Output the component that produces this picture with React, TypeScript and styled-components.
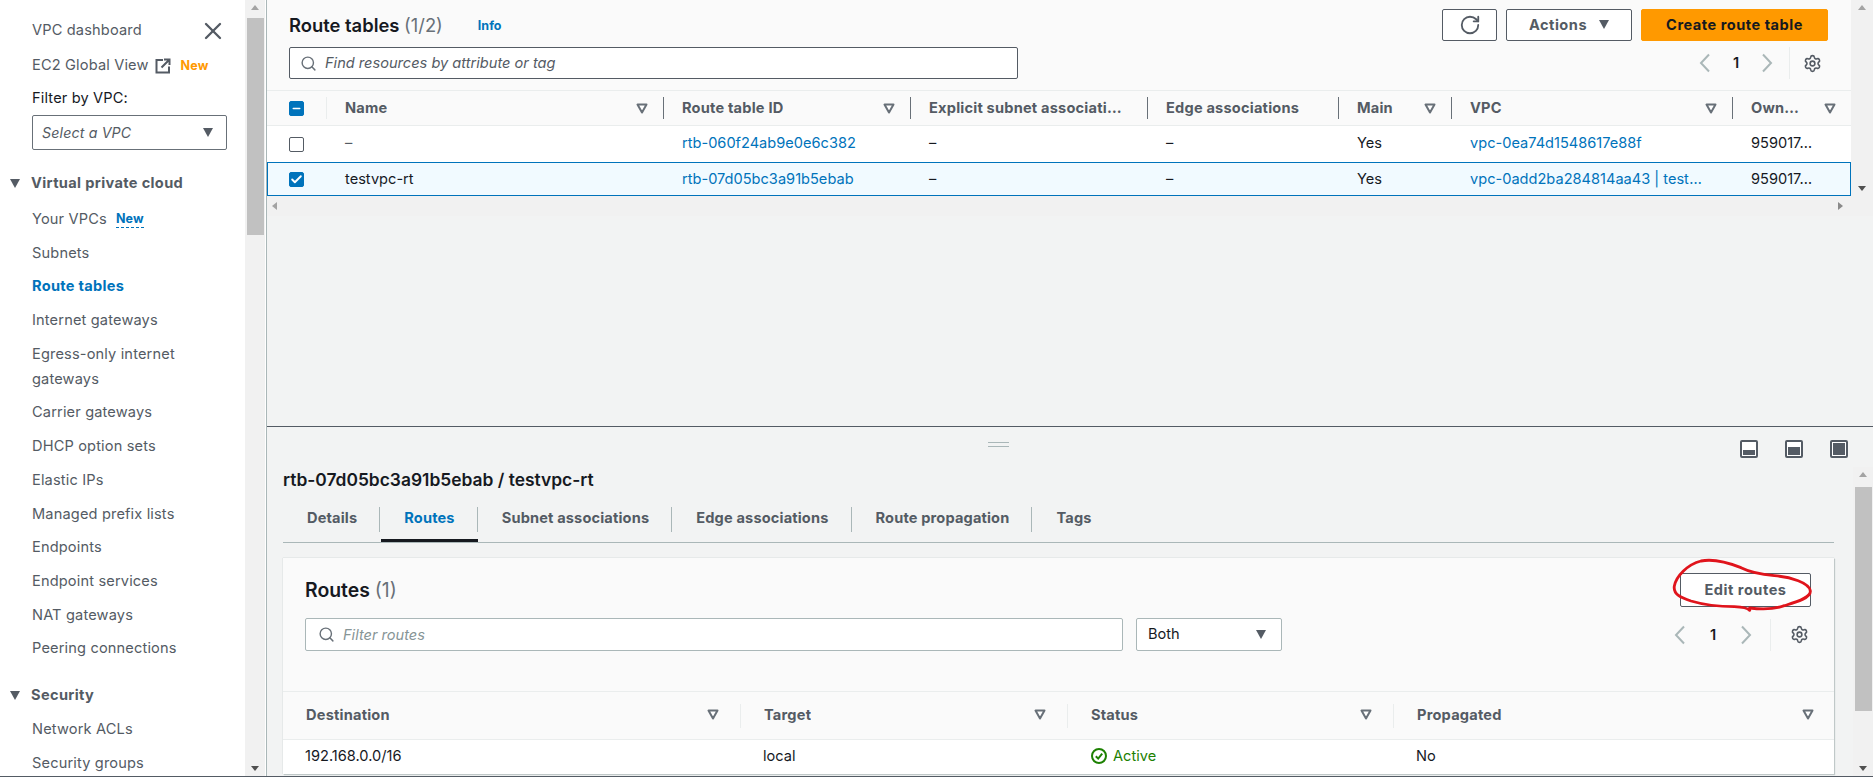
import React from "react";
import styled, { createGlobalStyle } from "styled-components";
import { RotateCw, Search, Settings, X, Check, Minus } from "lucide-react";

const FONT = `Inter, "Noto Sans", "Liberation Sans", sans-serif`;

const Global = createGlobalStyle`
  html, body { margin: 0; padding: 0; background: #fff; }
  body { font-family: ${FONT}; font-size: 14.6px; color: #16191f; }
  * { box-sizing: border-box; }
`;

const Page = styled.div`
  width: 1873px; height: 777px; display: flex; overflow: hidden;
  border-bottom: 1px solid #545b64;
`;
const Nav = styled.nav`
  width: 245px; flex: none; height: 100%; padding: 18px 0 0 32px; overflow: hidden; position: relative;
  color: #545b64; line-height: 25px; letter-spacing: 0.15px;
`;
const NavTopRow = styled.div`display: flex; align-items: center; justify-content: space-between; padding-right: 18px; height: 25px;`;
const NavLine = styled.div<{ $mt?: number }>`
  display: flex; align-items: center; margin-top: ${p => p.$mt ?? 8.7}px; gap: 6px; color: #545b64;
`;
const NavItem = styled.div<{ $active?: boolean }>`
  margin-top: 8.7px; width: 185px; color: ${p => p.$active ? "#0073bb" : "#545b64"};
  font-weight: ${p => p.$active ? 700 : 400};
  letter-spacing: ${p => p.$active ? 0.3 : 0.15}px;
`;
const OrangeNew = styled.span`color: #ff9900; font-size: 12.5px; font-weight: 700; margin-left: 4px;`;
const BlueNew = styled.span`color: #0073bb; font-size: 12.5px; font-weight: 700; line-height: 16px; border-bottom: 1px dashed #0073bb; margin-left: 3px;`;
const FilterLabel = styled.div`color: #16191f; margin-top: 8px;`;
const VpcSelect = styled.div`
  width: 195px; height: 35px; margin-top: 4px; border: 1px solid #687078; border-radius: 2px; background: #fff;
  display: flex; align-items: center; justify-content: space-between; padding: 0 13px 0 9px;
  font-style: italic; font-size: 14.2px; color: #545b64;
`;
const Caret = styled.span<{ $w?: number; $h?: number; $c?: string }>`
  display: inline-block; width: 0; height: 0; flex: none;
  border-left: ${p => (p.$w ?? 11) / 2}px solid transparent; border-right: ${p => (p.$w ?? 11) / 2}px solid transparent;
  border-top: ${p => p.$h ?? 9}px solid ${p => p.$c ?? "#545b64"};
`;
const SectionHead = styled.div<{ $mt: number }>`
  display: flex; align-items: center; margin: ${p => p.$mt}px 0 0 -22px; gap: 11px; font-weight: 700; color: #545b64; letter-spacing: 0.35px;
`;

const VScroll = styled.div<{ $w: number }>`
  width: ${p => p.$w}px; flex: none; height: 100%; background: #f1f1f1;
  display: flex; flex-direction: column; align-items: center; justify-content: space-between; padding: 5px 0;
  position: relative;
`;
const ArrowUp = styled.span`width: 0; height: 0; border-left: 4.5px solid transparent; border-right: 4.5px solid transparent; border-bottom: 5px solid #a3a3a3;`;
const ArrowDown = styled.span`width: 0; height: 0; border-left: 4.5px solid transparent; border-right: 4.5px solid transparent; border-top: 5px solid #505050;`;
const Thumb = styled.div<{ $top: number; $h: number }>`
  position: absolute; left: 2px; right: 1px; top: ${p => p.$top}px; height: ${p => p.$h}px; background: #c1c1c1;
`;

const Main = styled.main`
  flex: 1; min-width: 0; height: 100%; margin-left: 1px; border-left: 1px solid #aab7b8; display: flex; flex-direction: column;
`;
const TopPanel = styled.section`
  height: 427px; flex: none; border-bottom: 1px solid #545b64; background: #f2f3f3; display: flex; flex-direction: column;
`;
const TopArea = styled.div`display: flex; height: 196px; flex: none; background: #fafafa;`;
const TopContent = styled.div`flex: 1; min-width: 0; display: flex; flex-direction: column;`;
const HeadRow = styled.div`display: flex; justify-content: space-between; align-items: center; padding: 9px 23px 0 22px; height: 41px;`;
const Title = styled.div`display: flex; align-items: center; gap: 35px;`;
const H2 = styled.h2`
  margin: 0; font-size: 18.4px; font-weight: 600; color: #16191f; line-height: 24px;
  span { font-weight: 400; color: #687078; }
`;
const PanelHeading = styled(H2)`font-size: 17.4px;`;
const CardHeading = styled(H2)`font-size: 19.4px;`;
const Info = styled.a`color: #0073bb; font-size: 12.5px; font-weight: 700;`;
const Actions = styled.div`display: flex; gap: 9px;`;
const Btn = styled.button<{ $w: number; $primary?: boolean; $h?: number }>`
  width: ${p => p.$w}px; height: ${p => p.$h ?? 32}px; border-radius: 2px; font: 700 14.6px ${FONT}; letter-spacing: 0.5px;
  display: flex; align-items: center; justify-content: center; gap: 12px; padding: 0 0 1px;
  border: 1px solid ${p => p.$primary ? "#ff9900" : "#545b64"};
  background: ${p => p.$primary ? "#ff9900" : "#fff"};
  color: ${p => p.$primary ? "#16191f" : "#545b64"};
  position: relative;
`;
const SearchRow = styled.div`display: flex; justify-content: space-between; align-items: center; padding: 6px 22px 0 22px; height: 38px;`;
const SearchBox = styled.div<{ $w: number; $h: number; $border: string; $pl: number }>`
  width: ${p => p.$w}px; height: ${p => p.$h}px; background: #fff; border: 1px solid ${p => p.$border}; border-radius: 2px;
  display: flex; align-items: center; padding-left: ${p => p.$pl}px; gap: 8px; color: #545b64;
`;
const Placeholder = styled.span<{ $c: string }>`font-style: italic; color: ${p => p.$c};`;
const Pager = styled.div<{ $pr: number }>`display: flex; align-items: center; height: 32px; padding-right: ${p => p.$pr}px;`;
const PageNum = styled.span<{ $w: number }>`width: ${p => p.$w}px; text-align: center; color: #16191f; font-weight: 600;`;
const PagerGear = styled.div<{ $pl: number; $ml: number }>`
  display: flex; align-items: center; height: 100%; margin-left: ${p => p.$ml}px; padding-left: ${p => p.$pl}px; border-left: 1px solid #eaeded;
`;
const TableGap = styled.div`height: 11px; flex: none;`;

const Cell = styled.div<{ $link?: boolean; $muted?: boolean; $pl?: number }>`
  padding: 0 22px 2px ${p => p.$pl ?? 19}px; white-space: nowrap; overflow: hidden; text-overflow: ellipsis; min-width: 0;
  color: ${p => p.$link ? "#0073bb" : p.$muted ? "#545b64" : "#16191f"};
`;
const Row = styled.div<{ $cols: string; $h: number; $head?: boolean; $selected?: boolean }>`
  display: grid; grid-template-columns: ${p => p.$cols}; height: ${p => p.$h}px; align-items: center;
  background: ${p => p.$head ? "#fafafa" : p.$selected ? "#f1faff" : "#fff"};
  border-top: 1px solid ${p => p.$selected ? "#0073bb" : "#eaeded"};
  border-bottom: ${p => p.$selected ? "1px solid #0073bb" : "none"};
  border-right: ${p => p.$selected ? "1px solid #0073bb" : "none"};
  border-left: ${p => p.$selected ? "1px solid #0073bb" : "none"};
  ${p => p.$selected ? `& > ${Cell} { padding-bottom: 0; }` : ""}
`;
const HeadCell = styled.div<{ $light?: boolean; $noline?: boolean; $pl?: number; $pr?: number }>`
  height: ${p => p.$light ? 24 : 22}px; display: flex; align-items: center; justify-content: space-between;
  padding: 0 ${p => p.$pr ?? 15}px ${p => p.$light ? 2 : 0}px ${p => p.$pl ?? 18}px; letter-spacing: 0.2px;
  font-weight: 700; color: #545b64; white-space: nowrap; overflow: hidden; min-width: 0;
  border-left: ${p => p.$noline ? "none" : `1px solid ${p.$light ? "#eaeded" : "#687078"}`};
`;
const HeadLabel = styled.span`overflow: hidden; text-overflow: ellipsis;`;
const CheckCell = styled.div<{ $pl?: number }>`padding: 0 0 0 ${p => p.$pl ?? 22}px; display: flex; align-items: center;`;
const Box = styled.span<{ $on?: boolean }>`
  width: 15px; height: 15px; border-radius: 2px; display: flex; align-items: center; justify-content: center;
  background: ${p => p.$on ? "#0073bb" : "#fff"}; border: 1px solid ${p => p.$on ? "#0073bb" : "#545b64"}; color: #fff;
`;
const HScroll = styled.div`
  height: 20px; flex: none; background: #f1f1f1; display: flex; align-items: center; justify-content: space-between;
  padding: 0 30px 0 5px;
`;
const ArrowLeft = styled.span`width: 0; height: 0; border-top: 4.5px solid transparent; border-bottom: 4.5px solid transparent; border-right: 5px solid #a3a3a3;`;
const ArrowRight = styled.span`width: 0; height: 0; border-top: 4.5px solid transparent; border-bottom: 4.5px solid transparent; border-left: 5px solid #8a8a8a;`;

const BottomPanel = styled.section`flex: 1; min-height: 0; background: #f2f3f3; display: flex; flex-direction: column;`;
const SplitBar = styled.div`height: 40px; flex: none; display: flex; align-items: flex-start; padding: 13px 25px 0 721px;`;
const Handle = styled.div`width: 21px; height: 5px; border-top: 1px solid #aab7b8; border-bottom: 1px solid #aab7b8; margin-top: 2px;`;
const PanelIcons = styled.div`display: flex; gap: 27px; margin-left: auto;`;
const BottomBody = styled.div`flex: 1; min-height: 0; display: flex;`;
const BottomContent = styled.div`flex: 1; min-width: 0; padding: 1px 19px 0 16px; overflow: hidden;`;
const Tabs = styled.div`display: flex; height: 51px; border-bottom: 1px solid #aab7b8; align-items: flex-end;`;
const Tab = styled.div<{ $active?: boolean; $last?: boolean }>`
  position: relative; height: 25px; line-height: 23px; margin-bottom: 10px; padding: 0 22px 0 24px; font-weight: 700; white-space: nowrap; letter-spacing: 0.15px;
  color: ${p => p.$active ? "#0073bb" : "#545b64"};
  border-right: ${p => p.$last ? "none" : "1px solid #aab7b8"};
  ${p => p.$active ? `&::after { content: ""; position: absolute; left: 1px; right: -1px; bottom: -10px; height: 3px; background: #16191f; }` : ""}
`;
const Card = styled.div`
  margin-top: 15px; height: 216px; background: #fafafa; overflow: hidden;
  box-shadow: 0 0 1px 0 #aab7b8, 1px 1px 1px 0 #c4cccc;
`;
const CardHead = styled.div`height: 133px; padding: 15px 23px 0 22px;`;
const CardTop = styled.div`display: flex; justify-content: space-between; align-items: center; height: 34px;`;
const CardFilters = styled.div`display: flex; align-items: center; margin-top: 11px; height: 33px; gap: 13px;`;
const BothSelect = styled.div`
  width: 146px; height: 33px; background: #fff; border: 1px solid #aab7b8; border-radius: 2px;
  display: flex; align-items: center; justify-content: space-between; padding: 0 15px 1px 11px; color: #16191f;
`;
const CardPager = styled(Pager)`margin-left: auto;`;
const Status = styled.div`display: flex; align-items: center; gap: 6px; padding: 0 0 2px 24px; color: #1d8102;`;
const Scribble = styled.svg`position: absolute; left: -41px; top: -33px; pointer-events: none; overflow: visible;`;

const SortIcon = () => (
  <svg width="12" height="11" viewBox="0 0 12 11" style={{ flex: "none" }}>
    <path d="M1.5 1.5h9L6 9.5z" fill="#fff" stroke="#687078" strokeWidth="2" strokeLinejoin="round" />
  </svg>
);

const PanelIcon = ({ fill }: { fill: number }) => (
  <svg width="18" height="18" viewBox="0 0 18 18">
    <rect x="1" y="1" width="16" height="16" rx="1" fill="#fff" stroke="#545b64" strokeWidth="2" />
    <rect x="3" y={15 - fill} width="12" height={fill} fill="#545b64" />
  </svg>
);

const ExternalIcon = () => (
  <svg width="16" height="16" viewBox="0 0 16 16" fill="none" stroke="#545b64" strokeWidth="2">
    <path d="M8 2H1.5v12.5H14V8.5" />
    <path d="M6.5 9.5 14 2M9 1.5h5.5V7" />
  </svg>
);

const ActiveIcon = () => (
  <svg width="16" height="16" viewBox="0 0 16 16" fill="none" stroke="#1d8102" strokeWidth="2">
    <circle cx="8" cy="8" r="7" />
    <path d="M4.8 8.2 7.2 10.6 11.2 5.6" />
  </svg>
);

const Chevron = ({ dir }: { dir: "left" | "right" }) => (
  <svg width="24" height="24" viewBox="0 0 24 24" fill="none" stroke="#aab7b8" strokeWidth="2" style={{ flex: "none" }}>
    <path d={dir === "left" ? "M16 3.5 8 12l8 8.5" : "M8 3.5 16 12l-8 8.5"} />
  </svg>
);

const PagerIcons = ({ num, ml, pl }: { num: number; ml: number; pl: number }) => (
  <>
    <Chevron dir="left" />
    <PageNum $w={num}>1</PageNum>
    <Chevron dir="right" />
    <PagerGear $pl={pl} $ml={ml}><Settings size={19} strokeWidth={2} color="#545b64" /></PagerGear>
  </>
);

const topCols = "59px 337px 247px 237px 191px 113px 281px 1fr";
const selectedCols = "58px 337px 247px 237px 191px 113px 281px 1fr";
const bottomCols = "457px 327px 326px 1fr";
const topHeads = ["Name", "Route table ID", "Explicit subnet associations", "Edge associations", "Main", "VPC", "Owner ID"];
const noFilter = ["Explicit subnet associations", "Edge associations"];
const labelLimit: Record<string, string> = { "Explicit subnet associations": "Explicit subnet associati…", "Owner ID": "Own…" };
const navGroup1 = ["Internet gateways", "Egress-only internet gateways", "Carrier gateways", "DHCP option sets", "Elastic IPs", "Managed prefix lists", "Endpoints", "Endpoint services", "NAT gateways", "Peering connections"];

export default function App() {
  return (
    <Page>
      <Global />
      <Nav>
        <NavTopRow>VPC dashboard <X size={28} strokeWidth={2} color="#545b64" /></NavTopRow>
        <NavLine $mt={10}>EC2 Global View <ExternalIcon /><OrangeNew>New</OrangeNew></NavLine>
        <FilterLabel>Filter by VPC:</FilterLabel>
        <VpcSelect>Select a VPC <Caret /></VpcSelect>
        <SectionHead $mt={21}><Caret />Virtual private cloud</SectionHead>
        <NavLine $mt={11}>Your VPCs <BlueNew>New</BlueNew></NavLine>
        <NavItem>Subnets</NavItem>
        <NavItem $active>Route tables</NavItem>
        {navGroup1.map(t => <NavItem key={t}>{t}</NavItem>)}
        <SectionHead $mt={22}><Caret />Security</SectionHead>
        <NavItem>Network ACLs</NavItem>
        <NavItem>Security groups</NavItem>
      </Nav>
      <VScroll $w={20}>
        <ArrowUp /><Thumb $top={18} $h={217} /><ArrowDown />
      </VScroll>
      <Main>
        <TopPanel>
          <TopArea>
            <TopContent>
              <HeadRow>
                <Title><H2>Route tables <span>(1/2)</span></H2><Info>Info</Info></Title>
                <Actions>
                  <Btn $w={55}><RotateCw size={22} strokeWidth={2} /></Btn>
                  <Btn $w={126}>Actions <Caret /></Btn>
                  <Btn $w={187} $primary>Create route table</Btn>
                </Actions>
              </HeadRow>
              <SearchRow>
                <SearchBox $w={729} $h={32} $border="#545b64" $pl={10}>
                  <Search size={17} strokeWidth={2} color="#687078" />
                  <Placeholder $c="#545b64">Find resources by attribute or tag</Placeholder>
                </SearchBox>
                <Pager $pr={7}><PagerIcons num={38} ml={10} pl={13} /></Pager>
              </SearchRow>
              <TableGap />
              <Row $cols={topCols} $h={35} $head>
                <CheckCell><Box $on><Minus size={11} strokeWidth={3.5} /></Box></CheckCell>
                {topHeads.map((h, i) => (
                  <HeadCell key={h} $light={false} style={i === 0 ? { borderLeftColor: "#eaeded" } : undefined}>
                    <HeadLabel>{labelLimit[h] ?? h}</HeadLabel>
                    {!noFilter.includes(h) && <SortIcon />}
                  </HeadCell>
                ))}
              </Row>
              <Row $cols={topCols} $h={37}>
                <CheckCell><Box /></CheckCell>
                <Cell $muted>–</Cell>
                <Cell $link>rtb-060f24ab9e0e6c382</Cell>
                <Cell>–</Cell>
                <Cell>–</Cell>
                <Cell>Yes</Cell>
                <Cell $link>vpc-0ea74d1548617e88f</Cell>
                <Cell>959017…</Cell>
              </Row>
              <Row $cols={selectedCols} $h={34} $selected>
                <CheckCell $pl={21}><Box $on><Check size={13} strokeWidth={3.5} /></Box></CheckCell>
                <Cell>testvpc-rt</Cell>
                <Cell $link>rtb-07d05bc3a91b5ebab</Cell>
                <Cell>–</Cell>
                <Cell>–</Cell>
                <Cell>Yes</Cell>
                <Cell $link>vpc-0add2ba284814aa43 | testvpc-rt</Cell>
                <Cell>959017…</Cell>
              </Row>
            </TopContent>
            <VScroll $w={22}><ArrowUp /><ArrowDown /></VScroll>
          </TopArea>
          <HScroll><ArrowLeft /><ArrowRight /></HScroll>
        </TopPanel>
        <BottomPanel>
          <SplitBar>
            <Handle />
            <PanelIcons>
              <PanelIcon fill={5} />
              <PanelIcon fill={8} />
              <PanelIcon fill={12} />
            </PanelIcons>
          </SplitBar>
          <BottomBody>
            <BottomContent>
              <PanelHeading>rtb-07d05bc3a91b5ebab / testvpc-rt</PanelHeading>
              <Tabs>
                <Tab>Details</Tab>
                <Tab $active>Routes</Tab>
                <Tab>Subnet associations</Tab>
                <Tab>Edge associations</Tab>
                <Tab>Route propagation</Tab>
                <Tab $last>Tags</Tab>
              </Tabs>
              <Card>
                <CardHead>
                  <CardTop>
                    <CardHeading>Routes <span>(1)</span></CardHeading>
                    <Btn $w={131} $h={34}>
                      Edit routes
                      <Scribble width="233" height="100" viewBox="0 0 693 300">
                        <path d="M326 208C320 200 300 198 280 197C240 197 190 192 150 180C120 170 96 160 100 135C106 105 140 70 180 60C220 52 270 68 300 80C330 95 360 100 400 104C450 108 505 125 508 150C510 172 460 185 430 194C400 205 360 205 326 201" fill="none" stroke="#e0141c" strokeWidth="8.5" strokeLinecap="round" />
                      </Scribble>
                    </Btn>
                  </CardTop>
                  <CardFilters>
                    <SearchBox $w={818} $h={33} $border="#aab7b8" $pl={12}>
                      <Search size={17} strokeWidth={2} color="#687078" />
                      <Placeholder $c="#879596">Filter routes</Placeholder>
                    </SearchBox>
                    <BothSelect>Both <Caret /></BothSelect>
                    <CardPager $pr={2}><PagerIcons num={42} ml={12} pl={19} /></CardPager>
                  </CardFilters>
                </CardHead>
                <Row $cols={bottomCols} $h={48} $head>
                  {["Destination", "Target", "Status", "Propagated"].map((h, i) => (
                    <HeadCell key={h} $light $noline={i === 0} $pl={23} $pr={i === 3 ? 20 : 21}>
                      <HeadLabel>{h}</HeadLabel><SortIcon />
                    </HeadCell>
                  ))}
                </Row>
                <Row $cols={bottomCols} $h={35}>
                  <Cell $pl={22}>192.168.0.0/16</Cell>
                  <Cell $pl={23}>local</Cell>
                  <Status><ActiveIcon />Active</Status>
                  <Cell $pl={23}>No</Cell>
                </Row>
              </Card>
            </BottomContent>
            <VScroll $w={20}>
              <ArrowUp /><Thumb $top={20} $h={224} /><ArrowDown />
            </VScroll>
          </BottomBody>
        </BottomPanel>
      </Main>
    </Page>
  );
}
